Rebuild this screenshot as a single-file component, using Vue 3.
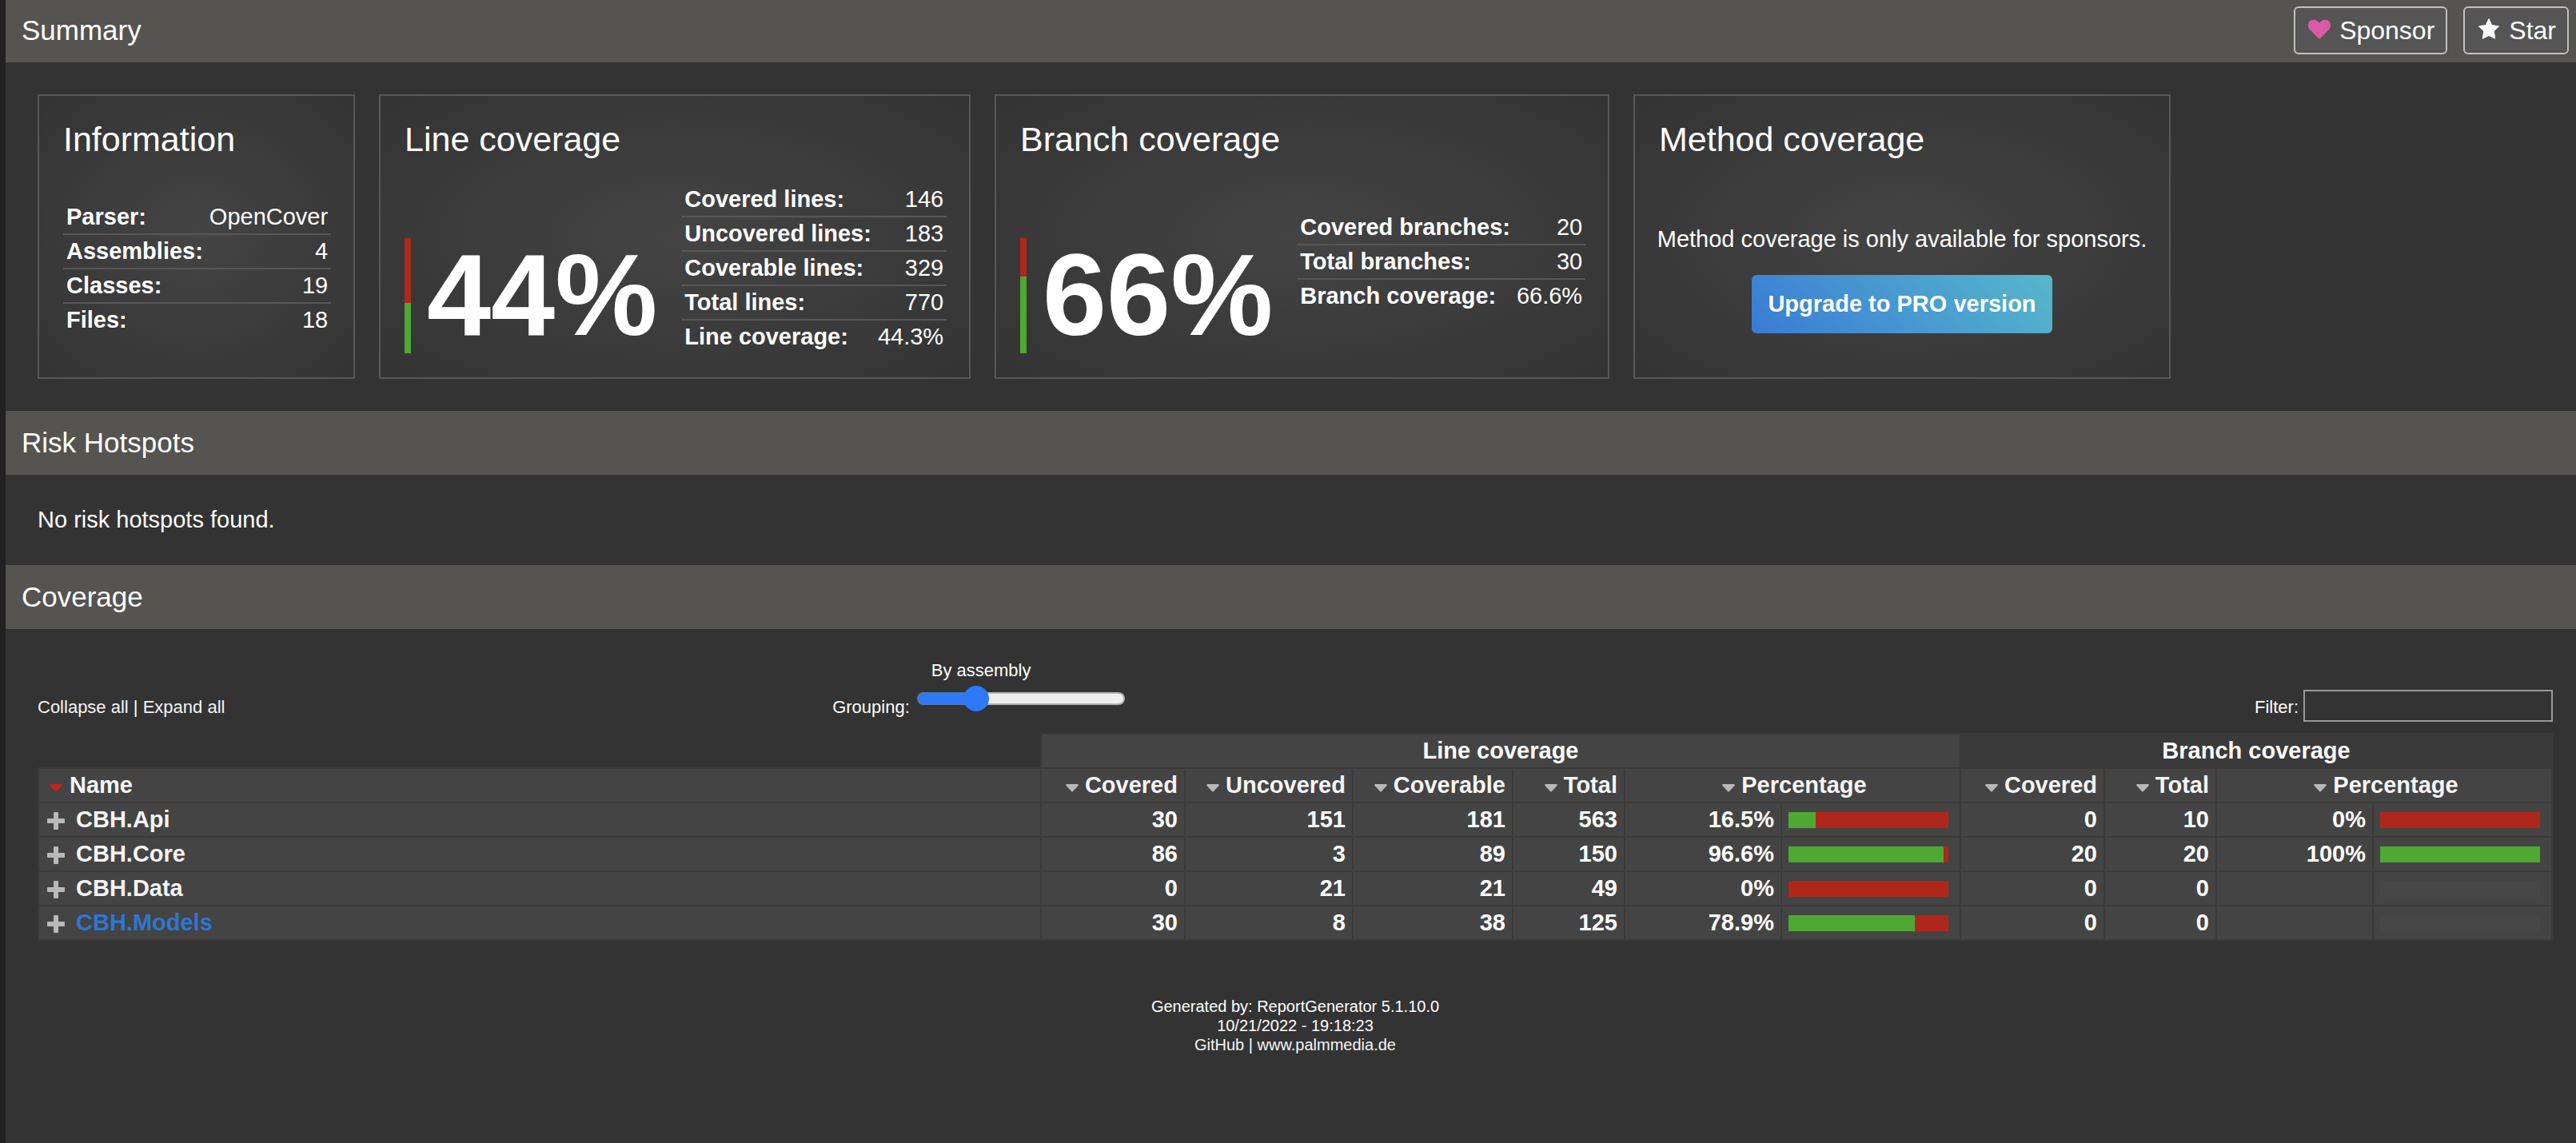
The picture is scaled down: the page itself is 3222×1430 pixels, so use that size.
<script setup>
import { ref, computed } from 'vue'

const infoRows = [
  ['Parser:', 'OpenCover'],
  ['Assemblies:', '4'],
  ['Classes:', '19'],
  ['Files:', '18'],
]

const coverageCards = [
  {
    title: 'Line coverage',
    kind: 'lines',
    percent: 44,
    rows: [
      ['Covered lines:', '146'],
      ['Uncovered lines:', '183'],
      ['Coverable lines:', '329'],
      ['Total lines:', '770'],
      ['Line coverage:', '44.3%'],
    ],
  },
  {
    title: 'Branch coverage',
    kind: 'branches',
    percent: 67,
    label: 66,
    rows: [
      ['Covered branches:', '20'],
      ['Total branches:', '30'],
      ['Branch coverage:', '66.6%'],
    ],
  },
]

const columns = [
  { label: 'Covered' },
  { label: 'Uncovered' },
  { label: 'Coverable' },
  { label: 'Total' },
  { label: 'Percentage', wide: true },
  { label: 'Covered' },
  { label: 'Total' },
  { label: 'Percentage', wide: true },
]

const assemblies = [
  { name: 'CBH.Api', line: [30, 151, 181, 563], linePct: '16.5%', lineBar: 17, branch: [0, 10], branchPct: '0%', branchBar: 0 },
  { name: 'CBH.Core', line: [86, 3, 89, 150], linePct: '96.6%', lineBar: 97, branch: [20, 20], branchPct: '100%', branchBar: 100 },
  { name: 'CBH.Data', line: [0, 21, 21, 49], linePct: '0%', lineBar: 0, branch: [0, 0], branchPct: '', branchBar: null },
  { name: 'CBH.Models', line: [30, 8, 38, 125], linePct: '78.9%', lineBar: 79, branch: [0, 0], branchPct: '', branchBar: null, active: true },
]

const filter = ref('')
const grouping = ref(0)
const fill = computed(() => ((Number(grouping.value) + 1) / 4) * 100 + '%')
const visible = computed(() =>
  assemblies.filter((a) => a.name.toLowerCase().includes(filter.value.toLowerCase()))
)
</script>

<template>
  <div class="page">
    <header class="section-head first">
      <h1>Summary</h1>
      <nav class="actions">
        <a class="action" href="#sponsor">
          <svg width="32" height="32" viewBox="0 0 32 32" aria-hidden="true">
            <path fill="#db5aa8" d="M16 29 3.800 16.800C1.300 14 1.300 9.500 3.800 6.800 6.500 4 11 4 13.600 6.500L16 8.600 18.400 6.500C21 4 25.500 4 28.200 6.800 30.700 9.500 30.700 14 28.200 16.800Z" />
          </svg>
          Sponsor
        </a>
        <a class="action" href="#star">
          <svg width="32" height="32" viewBox="0 0 32 32" aria-hidden="true">
            <path fill="#fff" stroke="#fff" stroke-width="1.500" stroke-linejoin="round" d="M16 4 19.600 11.800 28 13 21.900 18.600 23.500 27.800 16 24 8.500 27.800 10.100 18.600 4 13 12.400 11.800Z" />
          </svg>
          Star
        </a>
      </nav>
    </header>

    <section class="content cards">
      <article class="card info">
        <h2>Information</h2>
        <div class="card-body">
          <div class="facts">
            <table>
              <tbody>
                <tr v-for="[key, value] in infoRows" :key="key">
                  <th scope="row">{{ key }}</th>
                  <td>{{ value }}</td>
                </tr>
              </tbody>
            </table>
          </div>
        </div>
      </article>

      <article v-for="card in coverageCards" :key="card.title" class="card" :class="card.kind">
        <h2>{{ card.title }}</h2>
        <div class="card-body">
          <div class="gauge">
            <div class="gauge-bar"><div class="gauge-fill" :style="{ height: card.percent + '%' }"></div></div>
            <div class="gauge-number">{{ card.label ?? card.percent }}%</div>
          </div>
          <div class="facts">
            <table>
              <tbody>
                <tr v-for="[key, value] in card.rows" :key="key">
                  <th scope="row">{{ key }}</th>
                  <td>{{ value }}</td>
                </tr>
              </tbody>
            </table>
          </div>
        </div>
      </article>

      <article class="card methods">
        <h2>Method coverage</h2>
        <div class="card-body pro">
          <p>Method coverage is only available for sponsors.</p>
          <a class="pro-button" href="#pro">Upgrade to PRO version</a>
        </div>
      </article>
    </section>

    <header class="section-head"><h1>Risk Hotspots</h1></header>
    <section class="content">
      <p>No risk hotspots found.</p>
    </section>

    <header class="section-head"><h1>Coverage</h1></header>
    <section class="content coverage">
      <div class="toolbar">
        <div class="toggles">
          <a href="#collapse">Collapse all</a> | <a href="#expand">Expand all</a>
        </div>
        <div class="grouping">
          <label for="grouping">Grouping:</label>
          <div class="slider">
            <output for="grouping">By assembly</output>
            <input id="grouping" v-model="grouping" type="range" min="-1" max="3" step="1" :style="{ '--fill': fill }" />
          </div>
        </div>
        <div class="filter">
          <label for="filter">Filter:</label>
          <input id="filter" v-model="filter" type="text" />
        </div>
      </div>

      <table class="overview">
        <colgroup>
          <col />
          <col class="w-covered" /><col class="w-uncovered" /><col class="w-coverable" /><col class="w-total" />
          <col class="w-percent" /><col class="w-bar" />
          <col class="w-covered" /><col class="w-total" /><col class="w-percent" /><col class="w-bar" />
        </colgroup>
        <thead>
          <tr>
            <td class="blank"></td>
            <th class="group" colspan="6">Line coverage</th>
            <th class="group dim" colspan="4">Branch coverage</th>
          </tr>
          <tr>
            <th class="name">
              <a href="#name">
                <svg class="sort on" width="26" height="33" viewBox="0 0 26 33" aria-hidden="true">
                  <path d="M6 15H20Q21.500 15.500 20.500 17L14 24Q13 25 12 24L5.500 17Q4.500 15.500 6 15Z" />
                </svg>Name</a>
            </th>
            <th v-for="(col, i) in columns" :key="i" :colspan="col.wide ? 2 : 1" :class="{ group: col.wide }">
              <a href="#sort">
                <svg class="sort" width="26" height="33" viewBox="0 0 26 33" aria-hidden="true">
                  <path d="M6 15H20Q21.500 15.500 20.500 17L14 24Q13 25 12 24L5.500 17Q4.500 15.500 6 15Z" />
                </svg>{{ col.label }}</a>
            </th>
          </tr>
        </thead>
        <tbody>
          <tr v-for="row in visible" :key="row.name">
            <th class="name" scope="row">
              <a class="expander" :class="{ active: row.active }" href="#toggle">
                <svg class="plus" width="26" height="33" viewBox="0 0 26 33" aria-hidden="true">
                  <path d="M11 7h4q1 0 1 1v7h7q1 0 1 1v4q0 1-1 1h-7v7q0 1-1 1h-4q-1 0-1-1v-7h-7q-1 0-1-1v-4q0-1 1-1h7v-7q0-1 1-1Z" />
                </svg>{{ row.name }}</a>
            </th>
            <td v-for="(n, i) in row.line" :key="'l' + i">{{ n }}</td>
            <td>{{ row.linePct }}</td>
            <td><div class="bar"><div class="bar-fill" :style="{ width: row.lineBar + '%' }"></div></div></td>
            <td v-for="(n, i) in row.branch" :key="'b' + i">{{ n }}</td>
            <td>{{ row.branchPct }}</td>
            <td>
              <div class="bar" :class="{ none: row.branchBar === null }">
                <div v-if="row.branchBar !== null" class="bar-fill" :style="{ width: row.branchBar + '%' }"></div>
              </div>
            </td>
          </tr>
        </tbody>
      </table>

      <footer>
        Generated by: ReportGenerator 5.1.10.0<br />
        10/21/2022 - 19:18:23<br />
        <a href="#github">GitHub</a> | <a href="#site">www.palmmedia.de</a>
      </footer>
    </section>
  </div>
</template>

<style>
body {
  margin: 0;
  background: #333;
}
</style>

<style scoped>
.page {
  box-sizing: border-box;
  min-height: 100vh;
  border-left: 7px solid #212121;
  background: #333;
  color: #fff;
  font-family: "Liberation Sans", Arial, Helvetica, sans-serif;
  font-size: 29px;
  line-height: 33px;
}

h1,
h2,
p {
  margin: 0;
  font-weight: normal;
}

a {
  color: #f5f5f5;
  text-decoration: none;
}

.section-head {
  display: flex;
  align-items: center;
  justify-content: space-between;
  padding: 20px;
  background: #555451;
}

.section-head.first {
  padding: 8px 9px 10px 20px;
}

h1 {
  font-size: 35px;
  line-height: 40px;
}

.actions {
  display: flex;
  gap: 20px;
}

.action {
  display: flex;
  align-items: center;
  gap: 9px;
  padding: 0 14px;
  border: 2px solid #c0c0c0;
  border-radius: 6px;
  background: #555;
  color: #fff;
  font-size: 32px;
  line-height: 56px;
}

.action svg {
  margin-bottom: 4px;
}

.content {
  padding: 40px 29px 40px 40px;
}

.cards {
  display: flex;
  gap: 30px;
}

.card {
  box-sizing: border-box;
  padding: 30px;
  border: 2px solid #575757;
  background: radial-gradient(#444, #333);
}

.info {
  width: 397px;
}

.lines {
  width: 740px;
}

.branches {
  width: 769px;
}

.methods {
  width: 672px;
}

h2 {
  font-size: 43px;
  line-height: 48px;
}

.card-body {
  display: flex;
  align-items: center;
  gap: 30px;
  min-height: 213px;
  margin-top: 31px;
}

.facts {
  flex: 1;
}

.facts table {
  width: 100%;
  border-collapse: collapse;
}

.branches .facts {
  margin-bottom: 16px;
}

.facts tr + tr {
  border-top: 2px solid #575757;
}

.facts th,
.facts td {
  padding: 4px;
  text-align: left;
  white-space: nowrap;
}

.facts td {
  text-align: right;
}

.gauge {
  display: flex;
  align-self: flex-end;
  gap: 20px;
}

.gauge-bar {
  display: flex;
  flex-direction: column;
  justify-content: flex-end;
  width: 8px;
  background: #af271b;
}

.gauge-fill {
  background: #4ea832;
}

.gauge-number {
  font-size: 144px;
  font-weight: bold;
  line-height: 144px;
}

.pro {
  flex-direction: column;
  justify-content: center;
  gap: 28px;
  padding-top: 28px;
  min-height: 185px;
}

.pro p {
  white-space: nowrap;
}

.pro-button {
  padding: 20px;
  border-radius: 6px;
  background: linear-gradient(45deg, #3a7bd5, #56b8cb);
  color: #fff;
  font-weight: bold;
}

.toolbar {
  display: grid;
  grid-template-columns: 316fr 342fr 342fr;
  align-items: end;
  margin-bottom: 14px;
  font-size: 22px;
  line-height: 36px;
}

.grouping {
  display: flex;
  align-items: flex-end;
  gap: 9px;
}

.slider {
  display: flex;
  flex-direction: column;
  gap: 7px;
  padding-bottom: 13px;
}

.slider output {
  padding-left: 18px;
  line-height: 24px;
}

.slider input {
  appearance: none;
  width: 260px;
  height: 32px;
  margin: 0;
  background: none;
}

.slider input::-webkit-slider-runnable-track {
  box-sizing: border-box;
  height: 16px;
  border: 2px solid rgba(120, 120, 120, 0.5);
  border-radius: 8px;
  background: linear-gradient(to right, #2d79f7 var(--fill), #efefef var(--fill)) border-box;
}

.slider input::-webkit-slider-thumb {
  appearance: none;
  width: 32px;
  height: 32px;
  margin-top: -10px;
  border-radius: 50%;
  background: #2d79f7;
}

.filter {
  display: flex;
  align-items: flex-end;
  justify-content: flex-end;
  gap: 6px;
}

.filter input {
  box-sizing: border-box;
  width: 312px;
  height: 40px;
  padding: 0 8px;
  border: 2px solid #999;
  background: #333;
  color: #fff;
  font: inherit;
}

.overview {
  width: 100%;
  border-collapse: collapse;
  table-layout: fixed;
  font-weight: bold;
}

.w-covered {
  width: 180px;
}

.w-uncovered {
  width: 210px;
}

.w-coverable {
  width: 200px;
}

.w-total {
  width: 140px;
}

.w-percent {
  width: 196px;
}

.w-bar {
  width: 224px;
}

.overview th,
.overview td {
  padding: 4px 8px;
  border: 2px solid #3b3a39;
  background: #444;
  text-align: right;
  white-space: nowrap;
}

.overview .blank {
  border-top: none;
  border-left: none;
  background: none;
}

.overview .group {
  text-align: center;
}

.overview .dim {
  background: #3a3a3a;
}

.overview .name {
  text-align: left;
}

.overview th a {
  display: inline-flex;
  gap: 3px;
  vertical-align: top;
}

.overview .name a {
  gap: 4px;
}

.overview .name .expander {
  gap: 12px;
}

.overview .active {
  color: #2f76d2;
}

.sort,
.plus {
  fill: #b8b8b8;
}

.sort.on {
  fill: #bb2618;
}

.bar {
  width: 200px;
  height: 20px;
  background: #af271b;
}

.bar.none {
  background: #474747;
}

.bar-fill {
  height: 100%;
  background: #4ea832;
}

footer {
  margin-top: 70px;
  font-size: 20px;
  line-height: 24px;
  text-align: center;
}
</style>
